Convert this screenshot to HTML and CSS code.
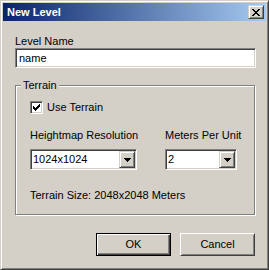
FILE: index.html
```html
<!DOCTYPE html>
<html lang="en">

<head>
    <meta charset="UTF-8">
    <meta name="viewport" content="width=device-width, initial-scale=1.0">
    <title>New Level</title>
    <link rel="stylesheet" href="styles.css">
</head>

<body>
    <div class="window">
        <div class="titlebar">
            <span class="title">New Level</span>
            <button class="close" type="button">
                <svg width="8" height="7" viewBox="0 0 8 7" shape-rendering="crispEdges">
                    <path d="M0 0h2v1h-2zM6 0h2v1h-2zM1 1h2v1h-2zM5 1h2v1h-2zM2 2h4v1h-4zM3 3h2v1h-2zM2 4h4v1h-4zM1 5h2v1h-2zM5 5h2v1h-2zM0 6h2v1h-2zM6 6h2v1h-2z" fill="#000"/>
                </svg>
            </button>
        </div>

        <div class="client">
            <div class="field-label">Level Name</div>
            <div class="textbox">name</div>

            <fieldset class="group">
                <legend>Terrain</legend>
                <div class="group-body">
                    <div class="check-row">
                        <span class="checkbox">
                            <svg width="7" height="7" viewBox="0 0 7 7" shape-rendering="crispEdges">
                                <path d="M6 0h1v1h-1zM5 1h2v1h-2zM0 2h1v1h-1zM4 2h3v1h-3zM0 3h2v1h-2zM3 3h3v1h-3zM0 4h5v1h-5zM1 5h3v1h-3zM2 6h1v1h-1z" fill="#000"/>
                            </svg>
                        </span>
                        <span class="check-label">Use Terrain</span>
                    </div>

                    <div class="combo-row">
                        <div class="combo-col first">
                            <div class="combo-label">Heightmap Resolution</div>
                            <div class="combo wide">
                                <span class="combo-value">1024x1024</span>
                                <span class="combo-btn">
                                    <svg width="7" height="4" viewBox="0 0 7 4" shape-rendering="crispEdges">
                                        <path d="M0 0h7v1h-7zM1 1h5v1h-5zM2 2h3v1h-3zM3 3h1v1h-1z" fill="#000"/>
                                    </svg>
                                </span>
                            </div>
                        </div>
                        <div class="combo-col">
                            <div class="combo-label">Meters Per Unit</div>
                            <div class="combo narrow">
                                <span class="combo-value">2</span>
                                <span class="combo-btn">
                                    <svg width="7" height="4" viewBox="0 0 7 4" shape-rendering="crispEdges">
                                        <path d="M0 0h7v1h-7zM1 1h5v1h-5zM2 2h3v1h-3zM3 3h1v1h-1z" fill="#000"/>
                                    </svg>
                                </span>
                            </div>
                        </div>
                    </div>

                    <div class="terrain-size">Terrain Size: 2048x2048 Meters</div>
                </div>
            </fieldset>

            <div class="buttons">
                <button class="btn default" type="button">OK</button>
                <button class="btn" type="button">Cancel</button>
            </div>
        </div>
    </div>
</body>

</html>
```

FILE: styles.css
```css
body {
    margin: 0;
    padding: 0;
    font-family: "Liberation Sans", Arial, sans-serif;
    font-size: 11px;
    line-height: 13px;
    color: #000;
    background-color: #d4d0c8;
}

.window {
    width: 269px;
    height: 270px;
    box-sizing: border-box;
    padding: 2px;
    background: #d4d0c8;
    border: 1px solid;
    border-color: #d4d0c8 #404040 #404040 #d4d0c8;
    box-shadow: inset 1px 1px #fff, inset -1px -1px #808080;
}

.titlebar {
    height: 18px;
    display: flex;
    align-items: center;
    padding: 0 2px;
    background: linear-gradient(to right, #0a246a, #a6caf0);
}

.title {
    flex: 1;
    padding-left: 2px;
    color: #fff;
    font-weight: bold;
}

.close {
    width: 16px;
    height: 14px;
    box-sizing: border-box;
    padding: 0;
    display: flex;
    align-items: center;
    justify-content: center;
    background: #d4d0c8;
    border: 1px solid;
    border-color: #d4d0c8 #404040 #404040 #d4d0c8;
    box-shadow: inset 1px 1px #fff, inset -1px -1px #808080;
}

.close svg,
.checkbox svg,
.combo-btn svg {
    display: block;
}

.client {
    padding: 14px 10px 0 12px;
}

.textbox {
    height: 20px;
    box-sizing: border-box;
    display: flex;
    align-items: center;
    padding-left: 3px;
    background: #fff;
    border: 1px solid;
    border-color: #808080 #fff #fff #808080;
    box-shadow: inset 1px 1px #404040, inset -1px -1px #d4d0c8;
}

.group {
    width: 240px;
    min-width: 0;
    box-sizing: border-box;
    margin: 11px 0 0 0;
    padding: 0;
    border: 1px solid #808080;
    box-shadow: 1px 1px 0 #fff, inset 1px 1px 0 #fff;
}

.group legend {
    margin-left: 5px;
    padding: 0 2px;
    background: #d4d0c8;
}

.group-body {
    padding: 9px 0 12px 14px;
}

.check-row {
    display: flex;
    align-items: center;
    height: 13px;
}

.checkbox {
    width: 13px;
    height: 13px;
    box-sizing: border-box;
    padding: 2px;
    background: #fff;
    border: 1px solid;
    border-color: #808080 #fff #fff #808080;
    box-shadow: inset 1px 1px #404040, inset -1px -1px #d4d0c8;
}

.check-label {
    margin-left: 4px;
}

.combo-row {
    display: flex;
    margin-top: 15px;
}

.combo-col.first {
    width: 135px;
}

.combo-label {
    margin-bottom: 7px;
}

.combo {
    height: 21px;
    box-sizing: border-box;
    display: flex;
    background: #fff;
    border: 1px solid;
    border-color: #808080 #fff #fff #808080;
    box-shadow: inset 1px 1px #404040, inset -1px -1px #d4d0c8;
    padding: 1px;
}

.combo.wide {
    width: 107px;
}

.combo.narrow {
    width: 72px;
}

.combo-value {
    flex: 1;
    display: flex;
    align-items: center;
    padding-left: 1px;
}

.combo-btn {
    width: 16px;
    box-sizing: border-box;
    display: flex;
    align-items: center;
    justify-content: center;
    background: #d4d0c8;
    border: 1px solid;
    border-color: #d4d0c8 #404040 #404040 #d4d0c8;
    box-shadow: inset 1px 1px #fff, inset -1px -1px #808080;
}

.terrain-size {
    margin-top: 19px;
}

.buttons {
    display: flex;
    justify-content: flex-end;
    gap: 9px;
    margin-top: 18px;
    margin-right: 1px;
}

.btn {
    width: 75px;
    height: 23px;
    box-sizing: border-box;
    padding: 0;
    font: inherit;
    color: #000;
    background: #d4d0c8;
    border: 1px solid;
    border-color: #fff #404040 #404040 #fff;
    box-shadow: inset 1px 1px #d4d0c8, inset -1px -1px #808080;
}

.btn.default {
    border-color: #000;
    box-shadow: inset 1px 1px #fff, inset -1px -1px #404040, inset -2px -2px #808080;
}
```
